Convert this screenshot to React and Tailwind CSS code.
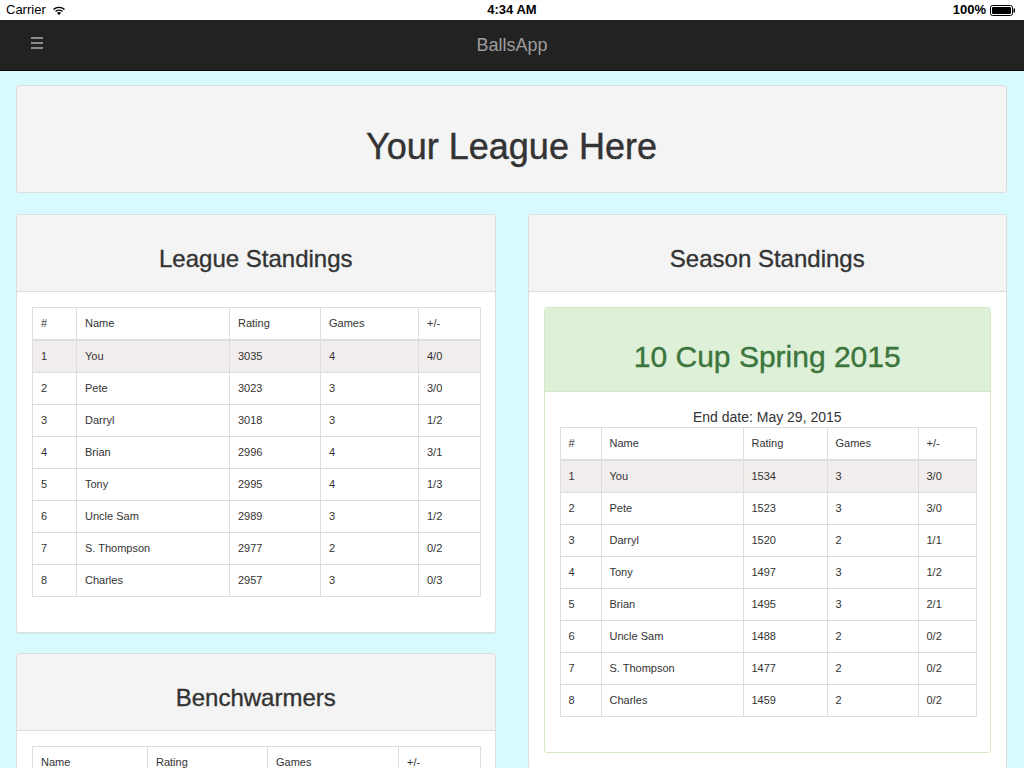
import React from "react";

const league = [
  ["1", "You", "3035", "4", "4/0"],
  ["2", "Pete", "3023", "3", "3/0"],
  ["3", "Darryl", "3018", "3", "1/2"],
  ["4", "Brian", "2996", "4", "3/1"],
  ["5", "Tony", "2995", "4", "1/3"],
  ["6", "Uncle Sam", "2989", "3", "1/2"],
  ["7", "S. Thompson", "2977", "2", "0/2"],
  ["8", "Charles", "2957", "3", "0/3"],
];

const season = [
  ["1", "You", "1534", "3", "3/0"],
  ["2", "Pete", "1523", "3", "3/0"],
  ["3", "Darryl", "1520", "2", "1/1"],
  ["4", "Tony", "1497", "3", "1/2"],
  ["5", "Brian", "1495", "3", "2/1"],
  ["6", "Uncle Sam", "1488", "2", "0/2"],
  ["7", "S. Thompson", "1477", "2", "0/2"],
  ["8", "Charles", "1459", "2", "0/2"],
];

const bench = [
  ["Mike", "1500", "0", "0/0"],
  ["Steve", "1500", "0", "0/0"],
];

function Table({ headers, widths, rows, highlightFirst }) {
  return (
    <table className="w-full table-fixed border-collapse border border-[#dddddd] text-[11px] leading-[15px] text-[#333333]">
      <thead>
        <tr>
          {headers.map((h, i) => (
            <th
              key={i}
              style={{ width: widths[i] }}
              className="border border-[#dddddd] border-b-2 px-2 py-2 text-left font-normal"
            >
              {h}
            </th>
          ))}
        </tr>
      </thead>
      <tbody>
        {rows.map((r, ri) => (
          <tr key={ri} className={highlightFirst && ri === 0 ? "bg-[#f2eded]" : ""}>
            {r.map((c, ci) => (
              <td key={ci} className="border border-[#dddddd] px-2 py-2">
                {c}
              </td>
            ))}
          </tr>
        ))}
      </tbody>
    </table>
  );
}

function Card({ title, children }) {
  return (
    <div className="rounded-[3px] border border-[#dddddd] bg-white shadow-[0_1px_1px_rgba(0,0,0,0.05)]">
      <div className="flex h-[77px] items-center justify-center rounded-t-[3px] border-b border-[#dddddd] bg-[#f4f4f4] pt-[11px]">
        <h2 className="text-[24px] leading-[26px] text-[#333333] [-webkit-text-stroke:0.35px_#333333]">{title}</h2>
      </div>
      <div className="p-[15px]">{children}</div>
    </div>
  );
}

export default function App() {
  return (
    <div
      className="min-h-[768px] bg-[#d6fafd]"
      style={{ fontFamily: '"Liberation Sans", Arial, sans-serif' }}
    >
      {/* status bar */}
      <div className="flex h-[20px] items-center justify-between bg-white px-[6px] text-[13px] leading-[20px] text-black">
        <div className="flex w-[200px] items-center gap-[6px]">
          <span>Carrier</span>
          <svg width="14" height="11" viewBox="0 0 14 11">
            <path d="M1 4 A9 9 0 0 1 13 4 L12 5 A7.5 7.5 0 0 0 2 5 Z" fill="black" />
            <path d="M3 6 A6 6 0 0 1 11 6 L10 7 A4.5 4.5 0 0 0 4 7 Z" fill="black" />
            <path d="M5 8 A3 3 0 0 1 9 8 L7 10 Z" fill="black" />
          </svg>
        </div>
        <span className="font-bold">4:34 AM</span>
        <div className="flex w-[200px] items-center justify-end gap-[4px] pr-[2px]">
          <span className="font-bold">100%</span>
          <svg width="26" height="11" viewBox="0 0 26 11">
            <rect x="0.5" y="0.5" width="22" height="10" rx="2" fill="none" stroke="black" />
            <rect x="2" y="2" width="19" height="7" rx="1" fill="black" />
            <rect x="23.5" y="3.5" width="1.5" height="4" fill="black" />
          </svg>
        </div>
      </div>

      {/* nav bar */}
      <div className="relative flex h-[51px] items-center justify-center border-b border-[#080808] bg-[#222222]">
        <div className="absolute left-[31px] top-[17px] flex flex-col gap-[3px]">
          <div className="h-[2px] w-[12px] bg-[#8a8a8a]" />
          <div className="h-[2px] w-[12px] bg-[#8a8a8a]" />
          <div className="h-[2px] w-[12px] bg-[#8a8a8a]" />
        </div>
        <span className="text-[18px] text-[#9d9d9d]">BallsApp</span>
      </div>

      {/* content */}
      <div className="pl-4 pr-[17px] pt-[14px]">
        <div className="flex h-[108px] items-center justify-center rounded-[3px] border border-[#dddddd] bg-[#f4f4f4] pt-[16px]">
          <h1 className="text-[36px] leading-[40px] text-[#333333] [-webkit-text-stroke:0.45px_#333333]">Your League Here</h1>
        </div>

        <div className="mt-[21px] grid grid-cols-2 items-start gap-8">
          <div className="flex flex-col gap-[20px]">
            <Card title="League Standings">
              <div className="mb-[20px]">
                <Table
                  headers={["#", "Name", "Rating", "Games", "+/-"]}
                  widths={[44, 153, 91, 98, 62]}
                  rows={league}
                  highlightFirst
                />
              </div>
            </Card>
            <Card title="Benchwarmers">
              <div className="mb-[20px]">
                <Table
                  headers={["Name", "Rating", "Games", "+/-"]}
                  widths={[115, 120, 131, 82]}
                  rows={bench}
                />
              </div>
            </Card>
          </div>

          <Card title="Season Standings">
            <div className="rounded-[3px] border border-[#d6e9c6] bg-white">
              <div className="flex h-[84px] items-center justify-center rounded-t-[3px] border-b border-[#d6e9c6] bg-[#dff0d8] pt-[14px]">
                <h3 className="text-[30px] leading-[33px] text-[#3c763d] [-webkit-text-stroke:0.4px_#3c763d]">10 Cup Spring 2015</h3>
              </div>
              <div className="px-[15px] pb-[35px] pt-[15px]">
                <div className="text-center text-[14px] leading-[20px] text-[#333333]">
                  End date: May 29, 2015
                </div>
                <Table
                  headers={["#", "Name", "Rating", "Games", "+/-"]}
                  widths={[41, 142, 84, 91, 58]}
                  rows={season}
                  highlightFirst
                />
              </div>
            </div>
          </Card>
        </div>
      </div>
    </div>
  );
}
